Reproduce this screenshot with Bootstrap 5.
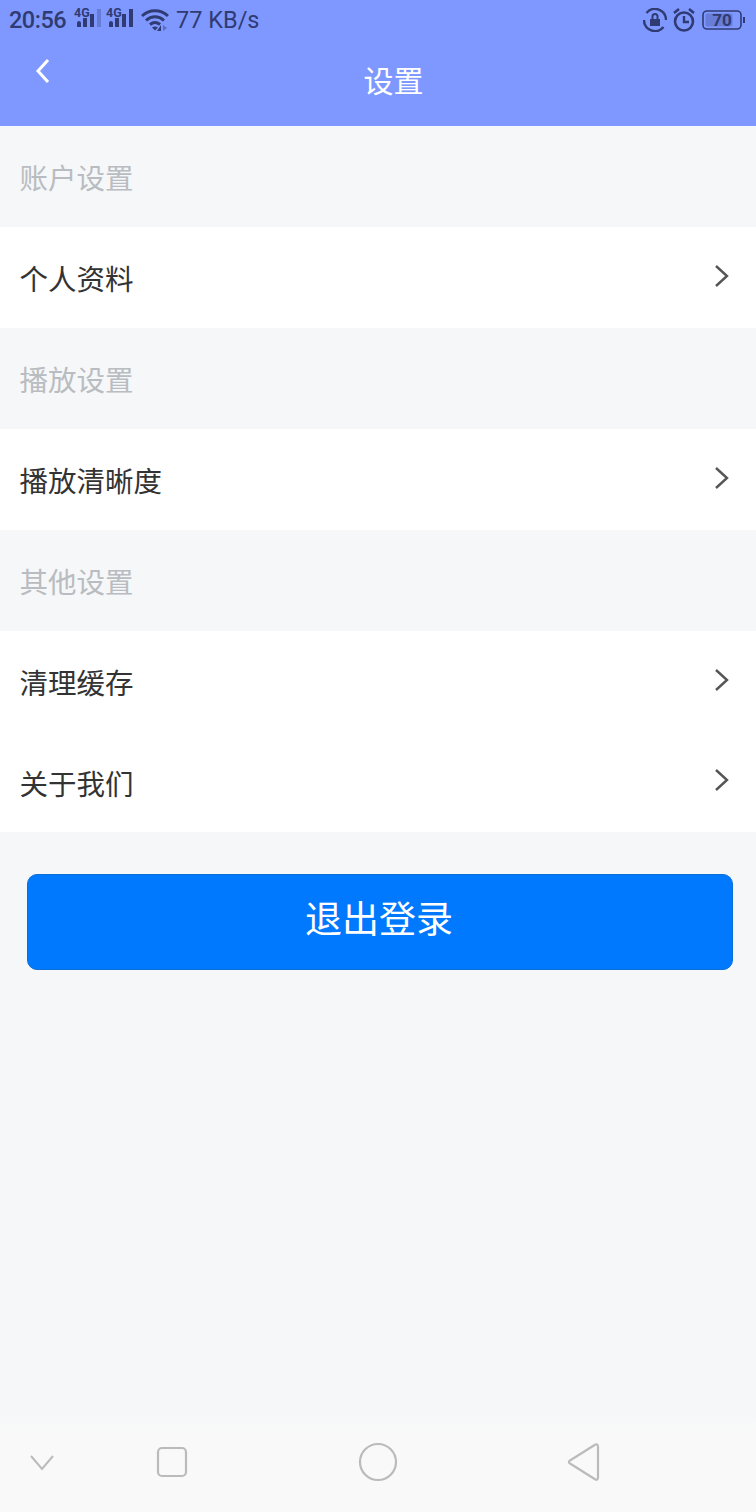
<!DOCTYPE html>
<html lang="zh-CN">

<head>
    <meta charset="UTF-8">
    <meta name="viewport" content="width=device-width, initial-scale=1.0">
    <title>设置</title>
    <link href="https://cdn.jsdelivr.net/npm/bootstrap@5.3.0/dist/css/bootstrap.min.css" rel="stylesheet">
    <style>
        body {
            width: 756px;
            height: 1512px;
            overflow: hidden;
            background: #f5f7f9;
            font-family: "Liberation Sans", "Noto Sans CJK SC", sans-serif;
        }

        .app-page { height: 1512px; }

        .app-head { height: 126px; background: #7f98ff; }
        .status-row { height: 40px; padding: 0 10px 0 9px; color: #2f3b72; font-family: Roboto, sans-serif; font-size: 23.5px; line-height: 40px; }
        .status-time { font-weight: 500; width: 58px; letter-spacing: -.5px; white-space: nowrap; }
        .sig-one { margin-left: 7px; }
        .sig-two { margin-left: 2px; }
        .wifi-icon { margin-left: 5px; }
        .status-speed { margin-left: 7px; }
        .alarm-icon { margin-left: 5px; }
        .batt-icon { margin-left: 6px; }
        .title-row { height: 86px; color: #fff; }
        .title-back { width: 43px; padding-left: 35px; padding-bottom: 24px; box-sizing: content-box; }
        .title-text { font-size: 30px; padding-left: 285.5px; padding-bottom: 4px; }

        .group-label { height: 101px; padding: 6px 0 0 19.5px; color: #b9bcc0; font-size: 28.5px; }
        .menu-row { height: 101px; padding: 6px 26px 0 19.5px; background: #fff; color: #333; font-size: 28.5px; }
        .menu-row svg { margin: -10px 1px 0 0; }
        .menu-row-last { height: 100px; }

        .logout-wrap { padding: 42px 23px 0 27px; }
        .logout-btn { width: 100%; height: 96px; padding: 0 2px 4px 0; font-size: 37px; line-height: 1; color: #fff; background: #0079fe; border: 1px solid #0b6fd8; border-radius: 10px; }

        .sys-nav { height: 102px; background: linear-gradient(#f5f7f9, #f9f9f9 24px); }
        .sys-nav svg { position: absolute; }
    </style>
</head>

<body>
    <div class="app-page d-flex flex-column">
        <div class="app-head">
            <div class="status-row d-flex align-items-center">
                <span class="status-time">20:56</span>
                <svg width="30" height="32" viewBox="0 0 30 32" class="sig-one">
                    <text x="0" y="13" font-family="Roboto, sans-serif" font-size="12.500" font-weight="700" fill="#2f3b72">4G</text>
                    <path d="M3 19a2 2 0 0 1 4 0v4H3zM9 14h4v9H9zM16 10h4v13h-4z" fill="#2f3b72" />
                    <path d="M23 5h4v18h-4z" fill="#2f3b72" opacity=".3" />
                </svg>
                <svg width="30" height="32" viewBox="0 0 30 32" class="sig-two">
                    <text x="0" y="13" font-family="Roboto, sans-serif" font-size="12.500" font-weight="700" fill="#2f3b72">4G</text>
                    <path d="M3 19a2 2 0 0 1 4 0v4H3zM9 14h4v9H9zM16 10h4v13h-4zM23 5h4v18h-4z" fill="#2f3b72" />
                </svg>
                <svg width="28" height="24" viewBox="0 0 28 24" class="wifi-icon">
                    <path d="M1 8C8 1 20 1 27 8M5 12.500c5.500-5 12.500-5 18 0M9 16.500c3.300-2.700 6.700-2.700 10 0" fill="none" stroke="#2f3b72" stroke-width="3" />
                    <path d="M11 19.500c2-1.300 4-1.300 6 0l-3 3z" fill="#2f3b72" />
                    <path d="M20 23v-6l-4 6z" fill="#2f3b72" />
                    <path d="M22 17v6l4-3z" fill="#2f3b72" opacity=".45" />
                </svg>
                <span class="status-speed">77 KB/s</span>
                <svg width="24" height="24" viewBox="0 0 24 24" class="ms-auto">
                    <path d="M23 12A11 11 0 0 0 3.500 5M1 12a11 11 0 0 0 19.500 7" fill="none" stroke="#2f3b72" stroke-width="2.400" />
                    <path d="M7 11h10v7H7zM8.500 11V8.500a3.500 3.500 0 0 1 7 0V11z" fill="#2f3b72" />
                    <path d="M10.500 11V8.500a1.500 1.500 0 0 1 3 0V11z" fill="#7f98ff" />
                </svg>
                <svg width="24" height="26" viewBox="0 0 24 26" class="alarm-icon">
                    <circle cx="12" cy="14.500" r="9" fill="none" stroke="#2f3b72" stroke-width="2.600" />
                    <path d="M12 9v6h5" fill="none" stroke="#2f3b72" stroke-width="2.400" />
                    <path d="M2 6l5-4M22 6l-5-4" fill="none" stroke="#2f3b72" stroke-width="2.600" />
                </svg>
                <svg width="44" height="22" viewBox="0 0 44 22" class="batt-icon">
                    <rect x="1" y="2" width="38" height="18" rx="4" fill="none" stroke="#2f3b72" stroke-width="1.600" />
                    <rect x="3.500" y="4.500" width="27" height="13" rx="2" fill="#2f3b72" opacity=".28" />
                    <path d="M42 8v6" stroke="#2f3b72" stroke-width="2" />
                    <text x="20" y="17" text-anchor="middle" font-family="Roboto, sans-serif" font-size="17" font-weight="700" fill="#2f3b72">70</text>
                </svg>
            </div>
            <div class="title-row d-flex align-items-center">
                <div class="title-back">
                    <svg width="16" height="26" viewBox="0 0 16 26" class="d-block">
                        <path d="M13 2L3 13l10 11" fill="none" stroke="#fff" stroke-width="3" />
                    </svg>
                </div>
                <div class="title-text">设置</div>
            </div>
        </div>

        <div class="group-label d-flex align-items-center">账户设置</div>
        <div class="menu-row d-flex align-items-center justify-content-between">
            <span>个人资料</span>
            <svg width="15" height="24" viewBox="0 0 15 24"><path d="M2 2l11 10L2 22" fill="none" stroke="#555" stroke-width="2.400" /></svg>
        </div>

        <div class="group-label d-flex align-items-center">播放设置</div>
        <div class="menu-row d-flex align-items-center justify-content-between">
            <span>播放清晰度</span>
            <svg width="15" height="24" viewBox="0 0 15 24"><path d="M2 2l11 10L2 22" fill="none" stroke="#555" stroke-width="2.400" /></svg>
        </div>

        <div class="group-label d-flex align-items-center">其他设置</div>
        <div class="menu-row d-flex align-items-center justify-content-between">
            <span>清理缓存</span>
            <svg width="15" height="24" viewBox="0 0 15 24"><path d="M2 2l11 10L2 22" fill="none" stroke="#555" stroke-width="2.400" /></svg>
        </div>
        <div class="menu-row menu-row-last d-flex align-items-center justify-content-between">
            <span>关于我们</span>
            <svg width="15" height="24" viewBox="0 0 15 24"><path d="M2 2l11 10L2 22" fill="none" stroke="#555" stroke-width="2.400" /></svg>
        </div>

        <div class="logout-wrap">
            <button type="button" class="btn logout-btn">退出登录</button>
        </div>

        <div class="sys-nav mt-auto">
            <svg width="26" height="18" viewBox="0 0 26 18" style="left: 29px; top: 1453px;"><path d="M2 3l11 13L24 3" fill="none" stroke="#bbb" stroke-width="2" /></svg>
            <svg width="32" height="32" viewBox="0 0 32 32" style="left: 156px; top: 1446px;"><rect x="2" y="2" width="28" height="28" rx="4" fill="none" stroke="#bbb" stroke-width="2.200" /></svg>
            <svg width="40" height="40" viewBox="0 0 40 40" style="left: 358px; top: 1442px;"><circle cx="20" cy="20" r="18" fill="none" stroke="#bbb" stroke-width="2.200" /></svg>
            <svg width="34" height="38" viewBox="0 0 34 38" style="left: 567px; top: 1443px;"><path d="M3 17.500L28 1.800c1.700-1 3-.2 3 1.700v31c0 1.900-1.300 2.700-3 1.700L3 20.500c-1.500-1-1.500-2 0-3z" fill="none" stroke="#bbb" stroke-width="2.200" stroke-linejoin="round" /></svg>
        </div>
    </div>

    <script src="https://cdn.jsdelivr.net/npm/bootstrap@5.3.0/dist/js/bootstrap.bundle.min.js"></script>
</body>

</html>
